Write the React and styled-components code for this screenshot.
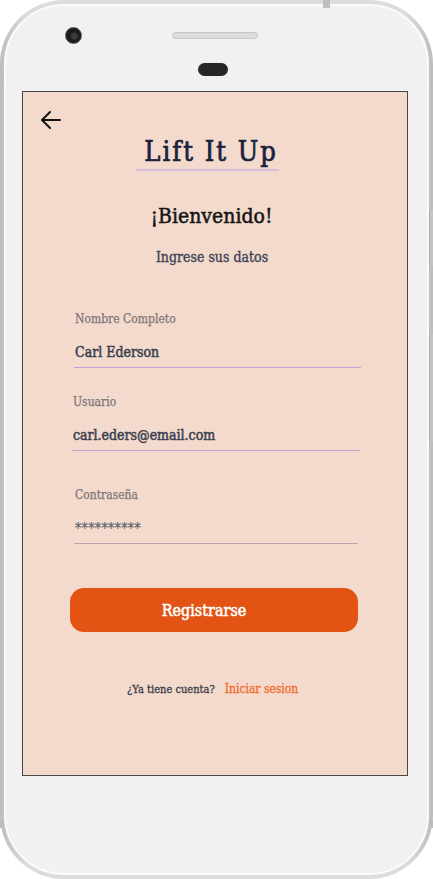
import styled, { createGlobalStyle } from "styled-components";

const GlobalStyle = createGlobalStyle`
  html, body {
    margin: 0;
    padding: 0;
    background: #ffffff;
  }
  * {
    box-sizing: border-box;
  }
`;

const font = `"DejaVu Serif Condensed", "DejaVu Serif", "Liberation Serif", serif`;

const Phone = styled.div`
  position: relative;
  width: 433px;
  height: 879px;
  border-radius: 64px;
  background: linear-gradient(to right, #bdbdbd, #dcdcdc 6%, #dcdcdc 94%, #bdbdbd);
  padding: 4px;
`;

const Face = styled.div`
  width: 100%;
  height: 100%;
  border-radius: 60px;
  background: #f2f1f1;
  border: 2px solid #fbfbfb;
  display: flex;
  flex-direction: column;
`;

const SideButton = styled.div`
  position: absolute;
  right: 0;
  top: ${(props) => props.top}px;
  width: 4px;
  height: ${(props) => props.height}px;
  border-radius: 2px 0 0 2px;
  background: #c4c4c4;
  border-left: 1px solid #a9a9a9;
`;

const EdgeMark = styled.div`
  position: absolute;
  left: ${(props) => props.left}px;
  top: ${(props) => props.top}px;
  width: ${(props) => props.width}px;
  height: ${(props) => props.height}px;
  background: #bdbdbd;
`;

const TopBezel = styled.div`
  height: 85px;
  display: flex;
  flex-direction: column;
  padding-top: 21px;
`;

const BezelRow = styled.div`
  display: flex;
  align-items: center;
  padding-left: 59px;
`;

const Camera = styled.div`
  width: 17px;
  height: 17px;
  border-radius: 50%;
  background: radial-gradient(circle at 55% 55%, #3a3a3a 0 3px, #1c1c1c 4px);
  border: 1px solid #555;
`;

const Speaker = styled.div`
  width: 86px;
  height: 7px;
  margin-left: 90px;
  border-radius: 4px;
  background: #dcdcdc;
  border: 1px solid #c6c6c6;
`;

const Sensor = styled.div`
  width: 30px;
  height: 13px;
  margin: 19px auto 0 192px;
  border-radius: 7px;
  background: #262626;
`;

const Screen = styled.div`
  margin-left: 16px;
  width: 386px;
  height: 685px;
  background: #f4dacd;
  border: 1px solid #474747;
  display: flex;
  flex-direction: column;
  font-family: ${font};
`;

const BackButton = styled.button`
  align-self: flex-start;
  margin: 18px 0 0 17px;
  padding: 0;
  border: none;
  background: transparent;
  line-height: 0;
  cursor: pointer;
`;

const Title = styled.h1`
  align-self: center;
  margin: 6px 15px 0 0;
  padding: 0 1px 1px 8px;
  font-family: ${font};
  font-size: 27px;
  font-weight: 400;
  -webkit-text-stroke: 0.7px #18223d;
  letter-spacing: 2px;
  color: #18223d;
  line-height: 32px;
  border-bottom: 2px solid #d6bcdf;
`;

const Welcome = styled.h2`
  align-self: center;
  margin: 32px 7px 0 0;
  font-size: 21px;
  font-weight: 400;
  -webkit-text-stroke: 0.5px #161616;
  color: #161616;
  line-height: 26px;
`;

const Subtitle = styled.p`
  align-self: center;
  margin: 19px 6px 0 0;
  font-size: 14px;
  -webkit-text-stroke: 0.35px #3d4456;
  color: #3d4456;
  line-height: 18px;
`;

const Form = styled.form`
  display: flex;
  flex-direction: column;
  margin-top: 45px;
`;

const Field = styled.label`
  display: flex;
  flex-direction: column;
  margin: ${(props) => props.top}px 0 0 ${(props) => props.left}px;
  width: ${(props) => props.width}px;
`;

const Label = styled.span`
  font-size: 12px;
  color: #7d7678;
  -webkit-text-stroke: 0.25px #7d7678;
  line-height: 16px;
  padding-left: 1px;
`;

const Input = styled.input`
  margin-top: 15px;
  padding: 0 0 5px 1px;
  border: none;
  border-bottom: 1px solid ${(props) => props.line};
  background: transparent;
  font-family: ${font};
  font-size: 14px;
  font-weight: 400;
  -webkit-text-stroke: ${(props) => (props.secret ? "0.2px #5a5f6c" : "0.5px #394050")};
  color: ${(props) => (props.secret ? "#5a5f6c" : "#394050")};
  letter-spacing: ${(props) => (props.secret ? "0.3px" : "0")};
  line-height: 20px;
  outline: none;
`;

const Submit = styled.button`
  margin: 44px 0 0 47px;
  width: 288px;
  height: 44px;
  padding: 0 20px 0 0;
  border: none;
  border-radius: 14px;
  background: #e25314;
  color: #ffffff;
  font-family: ${font};
  font-size: 16px;
  font-weight: 400;
  -webkit-text-stroke: 0.5px #ffffff;
  cursor: pointer;
`;

const Footer = styled.div`
  display: flex;
  align-items: baseline;
  gap: 10px;
  margin: 50px 0 0 104px;
  line-height: 14px;
`;

const Muted = styled.span`
  font-size: 11px;
  color: #383c48;
  -webkit-text-stroke: 0.3px #383c48;
`;

const LinkText = styled.a`
  font-size: 12px;
  color: #f06a2a;
  -webkit-text-stroke: 0.3px #f06a2a;
  text-decoration: none;
`;

function BackArrow() {
  return (
    <svg width="22" height="20" viewBox="0 0 22 20" fill="none">
      <path
        d="M20 10H2M10 2L2 10l8 8"
        stroke="#111"
        strokeWidth="2"
        strokeLinecap="round"
        strokeLinejoin="round"
      />
    </svg>
  );
}

const fields = [
  { label: "Nombre Completo", value: "Carl Ederson", top: 0, left: 51, width: 287, line: "#c99fd6" },
  { label: "Usuario", value: "carl.eders@email.com", top: 26, left: 49, width: 288, line: "#c99fd6" },
  { label: "Contraseña", value: "**********", top: 36, left: 51, width: 284, line: "#b6a4ba", secret: true },
];

export default function App() {
  return (
    <>
      <GlobalStyle />
      <Phone>
        <EdgeMark left={323} top={0} width={7} height={8} />
        <EdgeMark left={0} top={78} width={3} height={8} />
        <EdgeMark left={430} top={78} width={3} height={8} />
        <EdgeMark left={0} top={820} width={3} height={8} />
        <EdgeMark left={430} top={820} width={3} height={8} />
        <SideButton top={210} height={56} />
        <SideButton top={334} height={108} />
        <Face>
          <TopBezel>
            <BezelRow>
              <Camera />
              <Speaker />
            </BezelRow>
            <Sensor />
          </TopBezel>
          <Screen>
            <BackButton aria-label="Volver">
              <BackArrow />
            </BackButton>
            <Title>Lift It Up</Title>
            <Welcome>¡Bienvenido!</Welcome>
            <Subtitle>Ingrese sus datos</Subtitle>
            <Form onSubmit={(e) => e.preventDefault()}>
              {fields.map((field) => (
                <Field key={field.label} top={field.top} left={field.left} width={field.width}>
                  <Label>{field.label}</Label>
                  <Input
                    type="text"
                    defaultValue={field.value}
                    line={field.line}
                    secret={field.secret}
                    readOnly
                  />
                </Field>
              ))}
              <Submit type="submit">Registrarse</Submit>
            </Form>
            <Footer>
              <Muted>¿Ya tiene cuenta?</Muted>
              <LinkText href="#">Iniciar sesion</LinkText>
            </Footer>
          </Screen>
        </Face>
      </Phone>
    </>
  );
}
